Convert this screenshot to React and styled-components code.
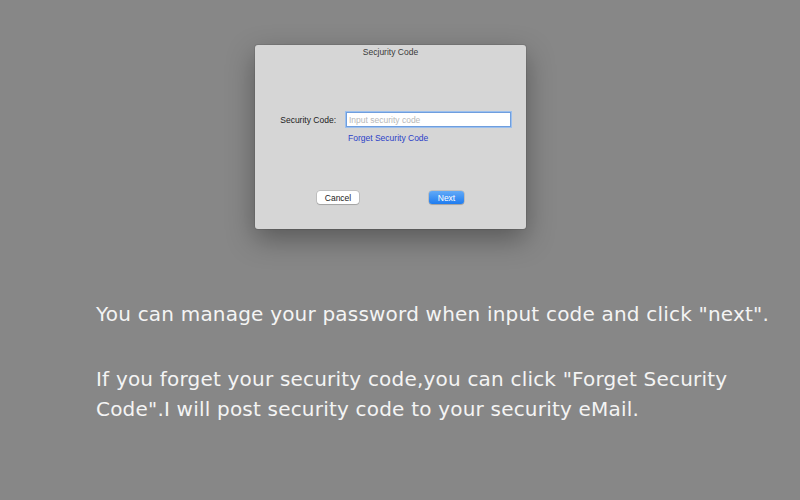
import React from "react";
import styled, { createGlobalStyle } from "styled-components";

const GlobalStyle = createGlobalStyle`
  html, body {
    margin: 0;
    padding: 0;
    background: #878787;
  }
  body {
    width: 800px;
    height: 500px;
    overflow: hidden;
  }
`;

function App() {
  return (
    <Page>
      <GlobalStyle />
      <Dialog>
        <TitleBar>Secjurity Code</TitleBar>
        <Body>
          <FieldRow>
            <Label>Security Code:</Label>
            <Field>
              <Input placeholder="Input security code" />
              <ForgetLink>Forget Security Code</ForgetLink>
            </Field>
          </FieldRow>
          <Buttons>
            <Button>Cancel</Button>
            <Button primary>Next</Button>
          </Buttons>
        </Body>
      </Dialog>
      <Notes>
        <Note>You can manage your password when input code and click "next".</Note>
        <Note>
          If you forget your security code,you can click "Forget Security
          Code".I will post security code to your security eMail.
        </Note>
      </Notes>
    </Page>
  );
}

export default App;

// Components
const Page = styled.div`
  width: 800px;
  height: 500px;
  background: #878787;
  display: flex;
  flex-direction: column;
  padding-top: 45px;
  box-sizing: border-box;
`;

const Dialog = styled.div`
  margin-left: 255px;
  width: 271px;
  height: 184px;
  background: #d6d6d6;
  border-radius: 3px;
  box-shadow: 0 10px 28px rgba(0, 0, 0, 0.35), 0 0 0 1px rgba(0, 0, 0, 0.08);
  display: flex;
  flex-direction: column;
  font-family: "Liberation Sans", Arial, sans-serif;
`;

const TitleBar = styled.div`
  height: 14px;
  padding-top: 2px;
  text-align: center;
  font-size: 8.5px;
  color: #3a3a3a;
`;

const Body = styled.div`
  flex: 1;
  display: flex;
  flex-direction: column;
  padding-top: 51px;
`;

const FieldRow = styled.div`
  display: flex;
  align-items: flex-start;
`;

const Label = styled.div`
  width: 81px;
  text-align: right;
  font-size: 8.5px;
  color: #222;
  padding-top: 3px;
  margin-right: 10px;
`;

const Field = styled.div`
  display: flex;
  flex-direction: column;
`;

const Input = styled.input`
  width: 165px;
  height: 15px;
  box-sizing: border-box;
  border: 1px solid #6f9ede;
  box-shadow: 0 0 0 1px #9cc0ee;
  background: #ffffff;
  font-family: "Liberation Sans", Arial, sans-serif;
  font-size: 8.5px;
  padding: 0 2px;
  outline: none;

  &::placeholder {
    color: #b8b8b8;
  }
`;

const ForgetLink = styled.a`
  margin-top: 6px;
  margin-left: 2px;
  font-size: 8.5px;
  color: #2c3fc8;
  cursor: pointer;
`;

const Buttons = styled.div`
  display: flex;
  margin-top: 48px;
  padding-left: 62px;
  gap: 70px;
`;

const Button = styled.div`
  height: 13px;
  width: ${(props) => (props.primary ? "35px" : "42px")};
  display: flex;
  justify-content: center;
  align-items: center;
  border-radius: 3px;
  font-size: 8.5px;
  color: ${(props) => (props.primary ? "#ffffff" : "#222")};
  background: ${(props) =>
    props.primary ? "linear-gradient(#62aaf7, #1f7cf0)" : "#ffffff"};
  box-shadow: 0 0 0 0.5px rgba(0, 0, 0, 0.2), 0 1px 1px rgba(0, 0, 0, 0.15);
`;

const Notes = styled.div`
  margin-top: 70px;
  padding-left: 96px;
  width: 690px;
  display: flex;
  flex-direction: column;
  gap: 35px;
`;

const Note = styled.p`
  margin: 0;
  font-family: "Comic Sans MS", "DejaVu Sans", sans-serif;
  font-size: 20px;
  letter-spacing: 0.2px;
  line-height: 30px;
  color: #f4f4f4;
`;
